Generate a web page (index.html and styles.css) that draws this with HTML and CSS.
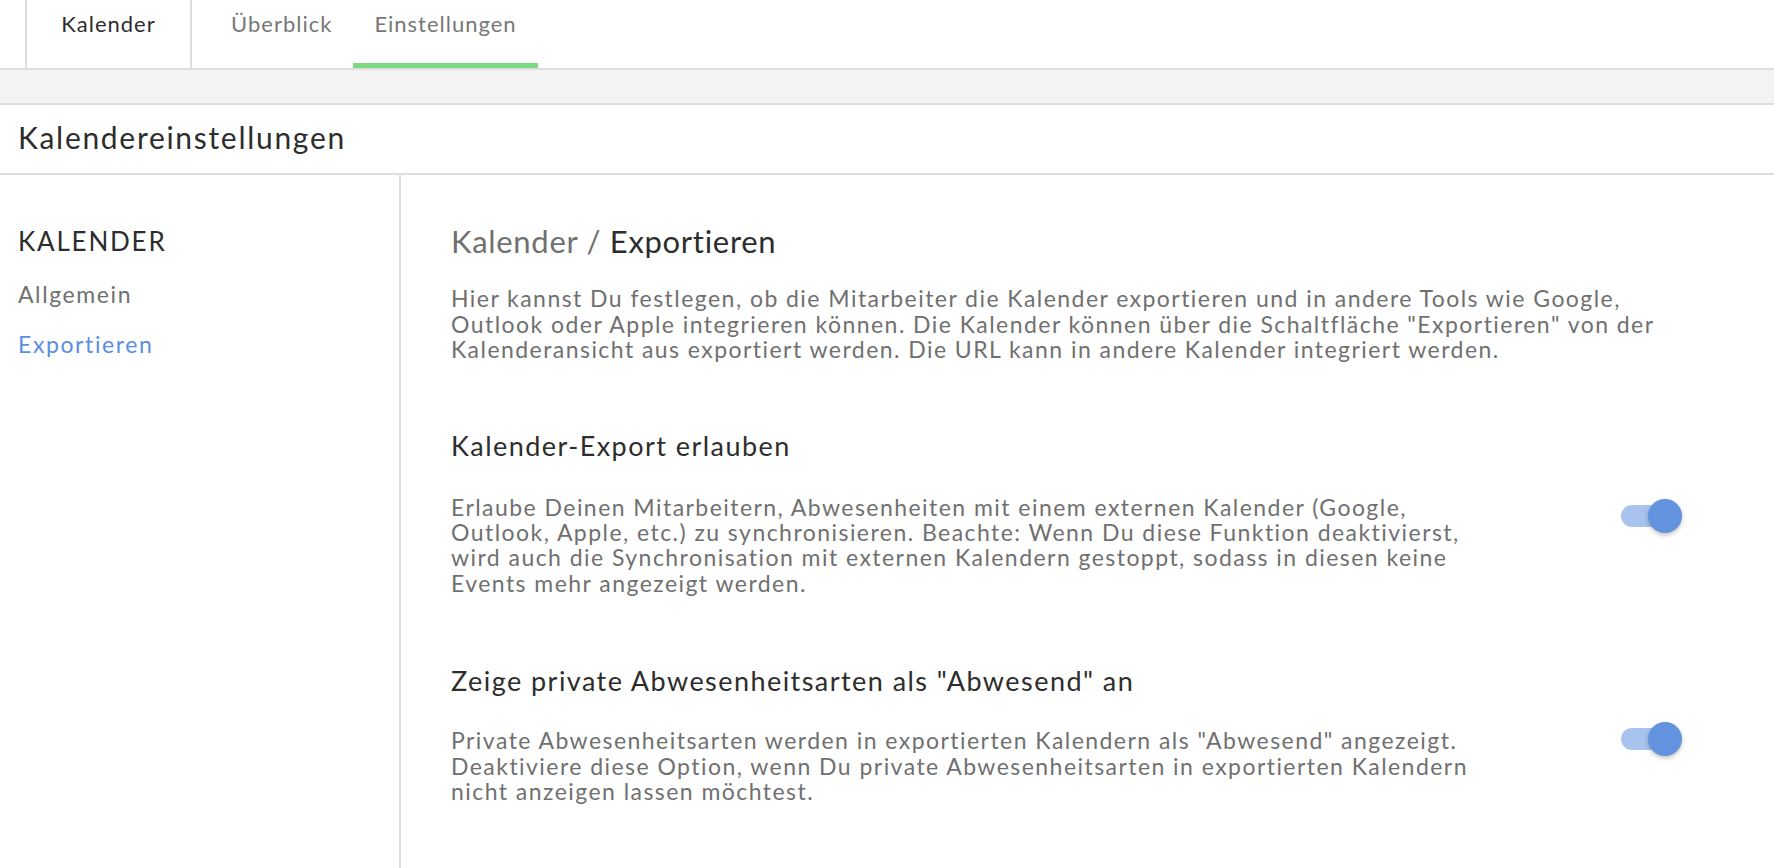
FILE: index.html
```html
<!DOCTYPE html>
<html lang="de">
<head>
<meta charset="utf-8">
<title>Kalendereinstellungen</title>
<link rel="stylesheet" href="styles.css">
</head>
<body>
<nav class="tabbar">
  <div class="tab-home">Kalender</div>
  <div class="tabs">
    <a class="tab">Überblick</a>
    <a class="tab tab-active">Einstellungen</a>
  </div>
</nav>
<div class="band"></div>
<header class="page-head">Kalendereinstellungen</header>
<main class="layout">
  <aside class="sidebar">
    <div class="side-title">KALENDER</div>
    <a class="side-link">Allgemein</a>
    <a class="side-link side-active">Exportieren</a>
  </aside>
  <section class="content">
    <h1 class="crumb"><span class="crumb-parent">Kalender / </span>Exportieren</h1>
    <p class="intro">Hier kannst Du festlegen, ob die Mitarbeiter die Kalender exportieren und in andere Tools wie Google, Outlook oder Apple integrieren können. Die Kalender können über die Schaltfläche "Exportieren" von der Kalenderansicht aus exportiert werden. Die URL kann in andere Kalender integriert werden.</p>

    <div class="setting">
      <div class="setting-text">
        <h2 class="setting-title">Kalender-Export erlauben</h2>
        <p class="setting-desc">Erlaube Deinen Mitarbeitern, Abwesenheiten mit einem externen Kalender (Google, Outlook, Apple, etc.) zu synchronisieren. Beachte: Wenn Du diese Funktion deaktivierst, wird auch die Synchronisation mit externen Kalendern gestoppt, sodass in diesen keine Events mehr angezeigt werden.</p>
      </div>
      <span class="switch"><span class="knob"></span></span>
    </div>

    <div class="setting setting-second">
      <div class="setting-text">
        <h2 class="setting-title">Zeige private Abwesenheitsarten als "Abwesend" an</h2>
        <p class="setting-desc">Private Abwesenheitsarten werden in exportierten Kalendern als "Abwesend" angezeigt. Deaktiviere diese Option, wenn Du private Abwesenheitsarten in exportierten Kalendern nicht anzeigen lassen möchtest.</p>
      </div>
      <span class="switch"><span class="knob"></span></span>
    </div>
  </section>
</main>
</body>
</html>
```
FILE: styles.css
```css
* { box-sizing: border-box; }
html, body { margin: 0; padding: 0; background: #fff; }
body {
  font-family: "Lato", "Open Sans", sans-serif;
  color: #2d2d2d;
  height: 868px;
  overflow: hidden;
}

.tabbar {
  display: flex;
  height: 70px;
  padding-left: 25px;
  border-bottom: 2px solid #dedede;
}
.tab-home {
  width: 167px;
  border-left: 2px solid #dedede;
  border-right: 2px solid #dedede;
  text-align: center;
  font-size: 22px;
  line-height: 30px;
  letter-spacing: 1px;
  padding-top: 9px;
  color: #2d2d2d;
}
.tabs {
  display: flex;
  margin-left: 18px;
}
.tab {
  display: block;
  padding: 9px 21px 0;
  font-size: 22px;
  line-height: 30px;
  letter-spacing: 1px;
  color: #777;
  height: 68px;
}
.tab-active {
  border-bottom: 5px solid #7dd981;
}

.band {
  height: 35px;
  background: #f4f4f4;
  border-bottom: 2px solid #dedede;
}

.page-head {
  height: 70px;
  display: flex;
  align-items: center;
  padding: 0 0 4px 18px;
  font-size: 30px;
  letter-spacing: 1.7px;
  color: #2d2d2d;
  border-bottom: 2px solid #dedede;
}

.layout {
  display: flex;
  height: 693px;
}
.sidebar {
  width: 401px;
  flex: none;
  border-right: 2px solid #dedede;
  padding: 50px 0 0 18px;
  display: flex;
  flex-direction: column;
}
.side-title {
  font-size: 26px;
  line-height: 32px;
  letter-spacing: 1.8px;
  color: #2d2d2d;
  margin-bottom: 22px;
}
.side-link {
  font-size: 23px;
  line-height: 30px;
  letter-spacing: 1.6px;
  color: #707070;
  margin-bottom: 20px;
}
.side-active { color: #5b8ee0; }

.content {
  flex: 1;
  min-width: 0;
  padding: 47px 107px 0 50px;
}
.crumb {
  margin: 0;
  font-weight: 400;
  font-size: 31px;
  line-height: 38px;
  letter-spacing: 0.7px;
  color: #2d2d2d;
}
.crumb-parent { color: #707070; }
.intro {
  margin: 26px 0 0;
  width: 1235px;
  font-size: 23px;
  line-height: 25.5px;
  letter-spacing: 1.45px;
  color: #707070;
}

.setting {
  display: flex;
  align-items: center;
  margin-top: 67px;
}
.setting-second { margin-top: 69px; }
.setting-text { width: 1042px; flex: none; }
.setting-title {
  margin: 0;
  font-weight: 400;
  font-size: 27px;
  line-height: 32px;
  letter-spacing: 1.45px;
  color: #2d2d2d;
}
.setting-desc {
  margin: 33px 0 0;
  font-size: 23px;
  line-height: 25.4px;
  letter-spacing: 1.45px;
  color: #707070;
}
.setting-second .setting-desc { margin-top: 31px; }
.switch {
  position: relative;
  margin-left: auto;
  margin-top: 7px;
  width: 46px;
  height: 22px;
  border-radius: 11px;
  background: #a9c3ef;
}
.setting-second .switch { margin-top: 8px; }
.knob {
  position: absolute;
  right: -15px;
  top: -6px;
  width: 34px;
  height: 34px;
  border-radius: 50%;
  background: #6393de;
  box-shadow: 0 2px 4px rgba(0,0,0,0.25);
}
```
